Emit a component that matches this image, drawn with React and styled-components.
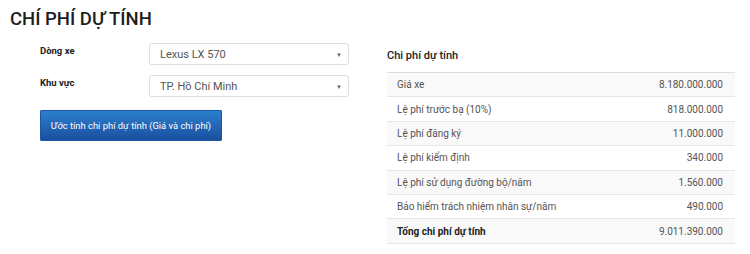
import React from "react";
import styled, { createGlobalStyle } from "styled-components";

const Global = createGlobalStyle`
  html, body { margin: 0; padding: 0; background: #fff; }
  body { font-family: Roboto, "Noto Sans", sans-serif; color: #333; }
`;

const Page = styled.div`
  width: 750px;
  height: 254px;
  box-sizing: border-box;
  padding: 8px 15px 0 10px;
  overflow: hidden;
`;

const Title = styled.h1`
  margin: 0;
  font-size: 18.5px;
  font-weight: 500;
  line-height: 22px;
  color: #1e1e1e;
`;

const Columns = styled.div`
  display: grid;
  grid-template-columns: 340px 348px;
  column-gap: 37px;
  margin-top: 13px;
`;

const Form = styled.div`
  display: flex;
  flex-direction: column;
  padding-left: 30px;
`;

const Field = styled.div`
  display: flex;
  align-items: flex-start;
  margin-bottom: 10px;
`;

const Label = styled.label`
  width: 109px;
  font-size: 9.5px;
  font-weight: 700;
  color: #222;
  line-height: 14px;
  padding-top: 1px;
`;

const Select = styled.div`
  width: 200px;
  height: 22px;
  box-sizing: border-box;
  border: 1px solid #ddd;
  border-radius: 3px;
  display: flex;
  align-items: center;
  justify-content: space-between;
  padding: 0 6px 0 10px;
  font-size: 11px;
  color: #555;
`;

const Arrow = styled.span`
  font-size: 6px;
  color: #666;
`;

const Button = styled.button`
  margin-top: 3px;
  width: 182px;
  height: 31px;
  border: 1px solid #1b57a6;
  border-radius: 1px;
  background: linear-gradient(#2c7fcd, #1a4f9f);
  color: #fff;
  font-family: Roboto, sans-serif;
  font-size: 9.4px;
  padding: 0;
`;

const Panel = styled.div`
  padding-top: 5px;
`;

const PanelTitle = styled.h2`
  margin: 0 0 8px;
  font-size: 11px;
  font-weight: 500;
  color: #222;
  line-height: 16px;
`;

const Table = styled.div`
  border-top: 1px solid #ddd;
`;

const Row = styled.div`
  display: flex;
  justify-content: space-between;
  align-items: center;
  height: 24.4px;
  box-sizing: border-box;
  border-bottom: 1px solid #e6e6e6;
  padding: 0 12px 0 10px;
  font-size: 10px;
  color: ${(p) => (p.$total ? "#222" : "#555")};
  font-weight: ${(p) => (p.$total ? 700 : 400)};
  background: ${(p) => (p.$striped ? "#f9f9f9" : "#fff")};
`;

const Value = styled.span`
  font-weight: 400;
  color: #555;
`;

const rows = [
  ["Giá xe", "8.180.000.000"],
  ["Lệ phí trước bạ (10%)", "818.000.000"],
  ["Lệ phí đăng ký", "11.000.000"],
  ["Lệ phí kiểm định", "340.000"],
  ["Lệ phí sử dụng đường bộ/năm", "1.560.000"],
  ["Bảo hiểm trách nhiệm nhân sự/năm", "490.000"],
];

export default function App() {
  return (
    <Page>
      <Global />
      <Title>CHÍ PHÍ DỰ TÍNH</Title>
      <Columns>
        <Form>
          <Field>
            <Label>Dòng xe</Label>
            <Select>
              Lexus LX 570<Arrow>▼</Arrow>
            </Select>
          </Field>
          <Field>
            <Label>Khu vực</Label>
            <Select>
              TP. Hồ Chí Minh<Arrow>▼</Arrow>
            </Select>
          </Field>
          <div>
            <Button>Ước tính chi phí dự tính (Giá và chi phí)</Button>
          </div>
        </Form>
        <Panel>
          <PanelTitle>Chi phí dự tính</PanelTitle>
          <Table>
            {rows.map(([k, v], i) => (
              <Row key={k} $striped={i % 2 === 0}>
                <span>{k}</span>
                <Value>{v}</Value>
              </Row>
            ))}
            <Row $total $striped>
              <span>Tổng chi phí dự tính</span>
              <Value>9.011.390.000</Value>
            </Row>
          </Table>
        </Panel>
      </Columns>
    </Page>
  );
}
